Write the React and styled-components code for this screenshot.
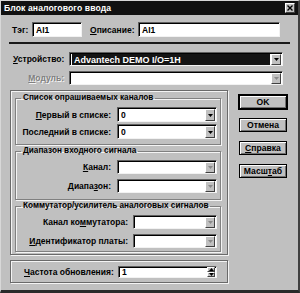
import React from "react";
import styled, { createGlobalStyle } from "styled-components";

const Global = createGlobalStyle`
  html, body { margin: 0; padding: 0; background: #c0c0c0; }
  body { font-family: "Liberation Sans", Arial, sans-serif; }
`;

const Window = styled.div`
  width: 300px;
  height: 293px;
  box-sizing: border-box;
  background: #c0c0c0;
  border-top: 1px solid #d8d8d8;
  border-left: 1px solid #d8d8d8;
  border-right: 2px solid #404040;
  border-bottom: 3px solid #2a2a2a;
  display: flex;
  flex-direction: column;
  font-size: 8.5px;
  font-weight: bold;
  color: #000;
  overflow: hidden;
`;

const TitleBar = styled.div`
  height: 14px;
  background: #111;
  color: #fff;
  display: flex;
  align-items: center;
  padding: 0 3px 0 3px;
  font-size: 8.6px;
  letter-spacing: 0.1px;
`;

const CloseBox = styled.div`
  margin-left: auto;
  width: 10px;
  height: 10px;
  box-sizing: border-box;
  background: #c0c0c0;
  border-top: 1px solid #fff;
  border-left: 1px solid #fff;
  border-right: 1px solid #404040;
  border-bottom: 1px solid #404040;
  display: flex;
  align-items: center;
  justify-content: center;
`;

const Row = styled.div`
  display: flex;
  align-items: center;
  margin: ${(p) => p.$m || "0"};
`;

const Label = styled.span`
  white-space: nowrap;
  box-sizing: border-box;
  flex-shrink: 0;
  width: ${(p) => (p.$w ? p.$w + "px" : "auto")};
  text-align: ${(p) => (p.$right ? "right" : "left")};
  margin-left: ${(p) => p.$ml || 0}px;
  margin-right: ${(p) => p.$gap || 0}px;
  color: ${(p) => (p.$disabled ? "#808080" : "#000")};
  text-shadow: ${(p) => (p.$disabled ? "1px 1px 0 #f4f4f4" : "none")};
`;

const Key = styled.span`
  text-decoration: underline;
`;

const Box = styled.div`
  box-sizing: border-box;
  flex-shrink: 0;
  width: ${(p) => p.$w}px;
  height: ${(p) => p.$h || 14}px;
  background: #fff;
  border-top: 1px solid #606060;
  border-left: 1px solid #606060;
  border-right: 1px solid #f2f2f2;
  border-bottom: 1px solid #f2f2f2;
  box-shadow: inset 1px 1px 0 #000;
  display: flex;
  align-items: center;
  padding: 1px 1px 0 3px;
`;

const Selected = styled.span`
  flex: 1;
  align-self: stretch;
  margin: 0 1px 0 -1px;
  background: #141414;
  color: #fff;
  display: flex;
  align-items: center;
  padding-left: 2px;
  font-size: 9px;
`;

const ArrowBtn = styled.div`
  width: 10px;
  align-self: stretch;
  margin-left: auto;
  box-sizing: border-box;
  background: #c0c0c0;
  border-top: 1px solid #fff;
  border-left: 1px solid #fff;
  border-right: 1px solid #404040;
  border-bottom: 1px solid #404040;
  display: flex;
  align-items: center;
  justify-content: center;
`;

const Separator = styled.div`
  margin: 5px 8px 0 8px;
  height: 2px;
  background: #1a1a1a;
`;

const Main = styled.div`
  display: flex;
  margin: 5px 0 0 9px;
`;

const LeftCol = styled.div`
  width: 218px;
  display: flex;
  flex-direction: column;
`;

const Panel = styled.div`
  box-sizing: border-box;
  border: 1px solid #6a6a6a;
  box-shadow: inset 1px 1px 0 #f4f4f4, 1px 1px 0 #f4f4f4;
  padding: ${(p) => p.$pad || "0"};
  margin-top: ${(p) => p.$mt || 0}px;
  height: ${(p) => (p.$h ? p.$h + "px" : "auto")};
  display: flex;
  flex-direction: column;
  justify-content: ${(p) => (p.$center ? "center" : "flex-start")};
`;

const Group = styled.fieldset`
  margin: ${(p) => p.$mt}px 6px 0 4px;
  padding: ${(p) => p.$pad};
  border: 1px solid #808080;
  box-shadow: 1px 1px 0 #f4f4f4, inset 1px 1px 0 #f4f4f4;
  display: flex;
  flex-direction: column;
  gap: ${(p) => p.$gap}px;
  min-width: 0;
`;

const Legend = styled.legend`
  padding: 0 2px;
  margin-left: 5px;
  line-height: 10px;
  font-size: 8.2px;
  white-space: nowrap;
`;

const RightCol = styled.div`
  display: flex;
  flex-direction: column;
  gap: 9px;
  margin: 5px 0 0 11px;
`;

const Button = styled.div`
  box-sizing: border-box;
  width: 48px;
  height: 14px;
  background: #c0c0c0;
  border: 1px solid #000;
  box-shadow: ${(p) =>
    p.$default
      ? "0 0 0 1px #000, inset 1px 1px 0 #fff, inset -1px -1px 0 #707070"
      : "inset 1px 1px 0 #fff, inset -1px -1px 0 #707070"};
  display: flex;
  align-items: center;
  justify-content: center;
  font-size: 8.6px;
`;

const Spin = styled.div`
  margin-left: auto;
  width: 8px;
  align-self: stretch;
  margin-top: -1px;
  display: flex;
  flex-direction: column;
`;

const SpinHalf = styled.div`
  flex: 1;
  box-sizing: border-box;
  background: #c0c0c0;
  border-top: 1px solid #fff;
  border-left: 1px solid #fff;
  border-right: 1px solid #404040;
  border-bottom: 1px solid #404040;
  display: flex;
  align-items: center;
  justify-content: center;
`;

const Tri = ({ up, color = "#000" }) => (
  <svg width="5" height="3" viewBox="0 0 5 3">
    <polygon points={up ? "0,3 5,3 2.5,0" : "0,0 5,0 2.5,3"} fill={color} />
  </svg>
);

const Combo = ({ w, h, disabled, children }) => (
  <Box $w={w} $h={h}>
    {children}
    <ArrowBtn>
      <Tri color={disabled ? "#8a8a8a" : "#000"} />
    </ArrowBtn>
  </Box>
);

const FormRow = ({ labelW, gap, boxW, label, value, disabled, h = 14 }) => (
  <Row>
    <Label $w={labelW} $right $gap={gap}>
      {label}
    </Label>
    <Combo w={boxW} h={h} disabled={disabled}>
      {value}
    </Combo>
  </Row>
);

export default function App() {
  return (
    <>
      <Global />
      <Window>
        <TitleBar>
          Блок аналогового ввода
          <CloseBox>
            <svg width="6" height="6" viewBox="0 0 6 6">
              <path d="M0.5 0.5 L5.5 5.5 M5.5 0.5 L0.5 5.5" stroke="#000" strokeWidth="1.4" />
            </svg>
          </CloseBox>
        </TitleBar>

        <Row $m="7px 0 0 11px">
          <Label $w={20}>Тэг:</Label>
          <Box $w={50} $h={15}>AI1</Box>
          <Label $w={48} $ml={8}>
            <Key>О</Key>писание:
          </Label>
          <Box $w={142} $h={15}>AI1</Box>
        </Row>

        <Separator />

        <Row $m="8px 0 0 12px">
          <Label $w={51} $right $gap={5}>
            <Key>У</Key>стройство:
          </Label>
          <Combo w={214} h={14}>
            <Selected>Advantech DEMO I/O=1H</Selected>
          </Combo>
        </Row>

        <Row $m="5px 0 0 12px">
          <Label $w={51} $right $gap={5} $disabled>
            <Key>М</Key>одуль:
          </Label>
          <Combo w={214} h={14} disabled />
        </Row>

        <Main>
          <LeftCol>
            <Panel $pad="0 0 4px 0" $h={165}>
              <Group $mt={2} $pad="4px 3px 5px 0" $gap={2}>
                <Legend>Список опрашиваемых каналов</Legend>
                <FormRow labelW={95} gap={6} boxW={100} h={15} label={<><Key>П</Key>ервый в списке:</>} value="0" />
                <FormRow labelW={95} gap={6} boxW={100} h={15} label="Последний в списке:" value="0" />
              </Group>
              <Group $mt={1} $pad="4px 3px 6px 0" $gap={5}>
                <Legend>Диапазон входного сигнала</Legend>
                <FormRow labelW={95} gap={6} boxW={100} label={<><Key>К</Key>анал:</>} disabled />
                <FormRow labelW={95} gap={6} boxW={100} label={<>Диапа<Key>з</Key>он:</>} disabled />
              </Group>
              <Group $mt={1} $pad="4px 3px 3px 0" $gap={5}>
                <Legend>Коммутатор/усилитель аналоговых сигналов</Legend>
                <FormRow labelW={112} gap={5} boxW={84} label={<>Канал ко<Key>м</Key>мутатора:</>} disabled />
                <FormRow labelW={112} gap={5} boxW={84} label={<><Key>И</Key>дентификатор платы:</>} disabled />
              </Group>
            </Panel>

            <Panel $mt={5} $h={23} $pad="0 0 0 13px" $center>
              <Row>
                <Label $w={93} $gap={1}>
                  <Key>Ч</Key>астота обновления:
                </Label>
                <Box $w={99} $h={12}>
                  1
                  <Spin>
                    <SpinHalf>
                      <Tri up />
                    </SpinHalf>
                    <SpinHalf>
                      <Tri />
                    </SpinHalf>
                  </Spin>
                </Box>
              </Row>
            </Panel>
          </LeftCol>

          <RightCol>
            <Button $default>OK</Button>
            <Button>Отмена</Button>
            <Button>
              <Key>С</Key>правка
            </Button>
            <Button>
              Масш<Key>т</Key>аб
            </Button>
          </RightCol>
        </Main>
      </Window>
    </>
  );
}
